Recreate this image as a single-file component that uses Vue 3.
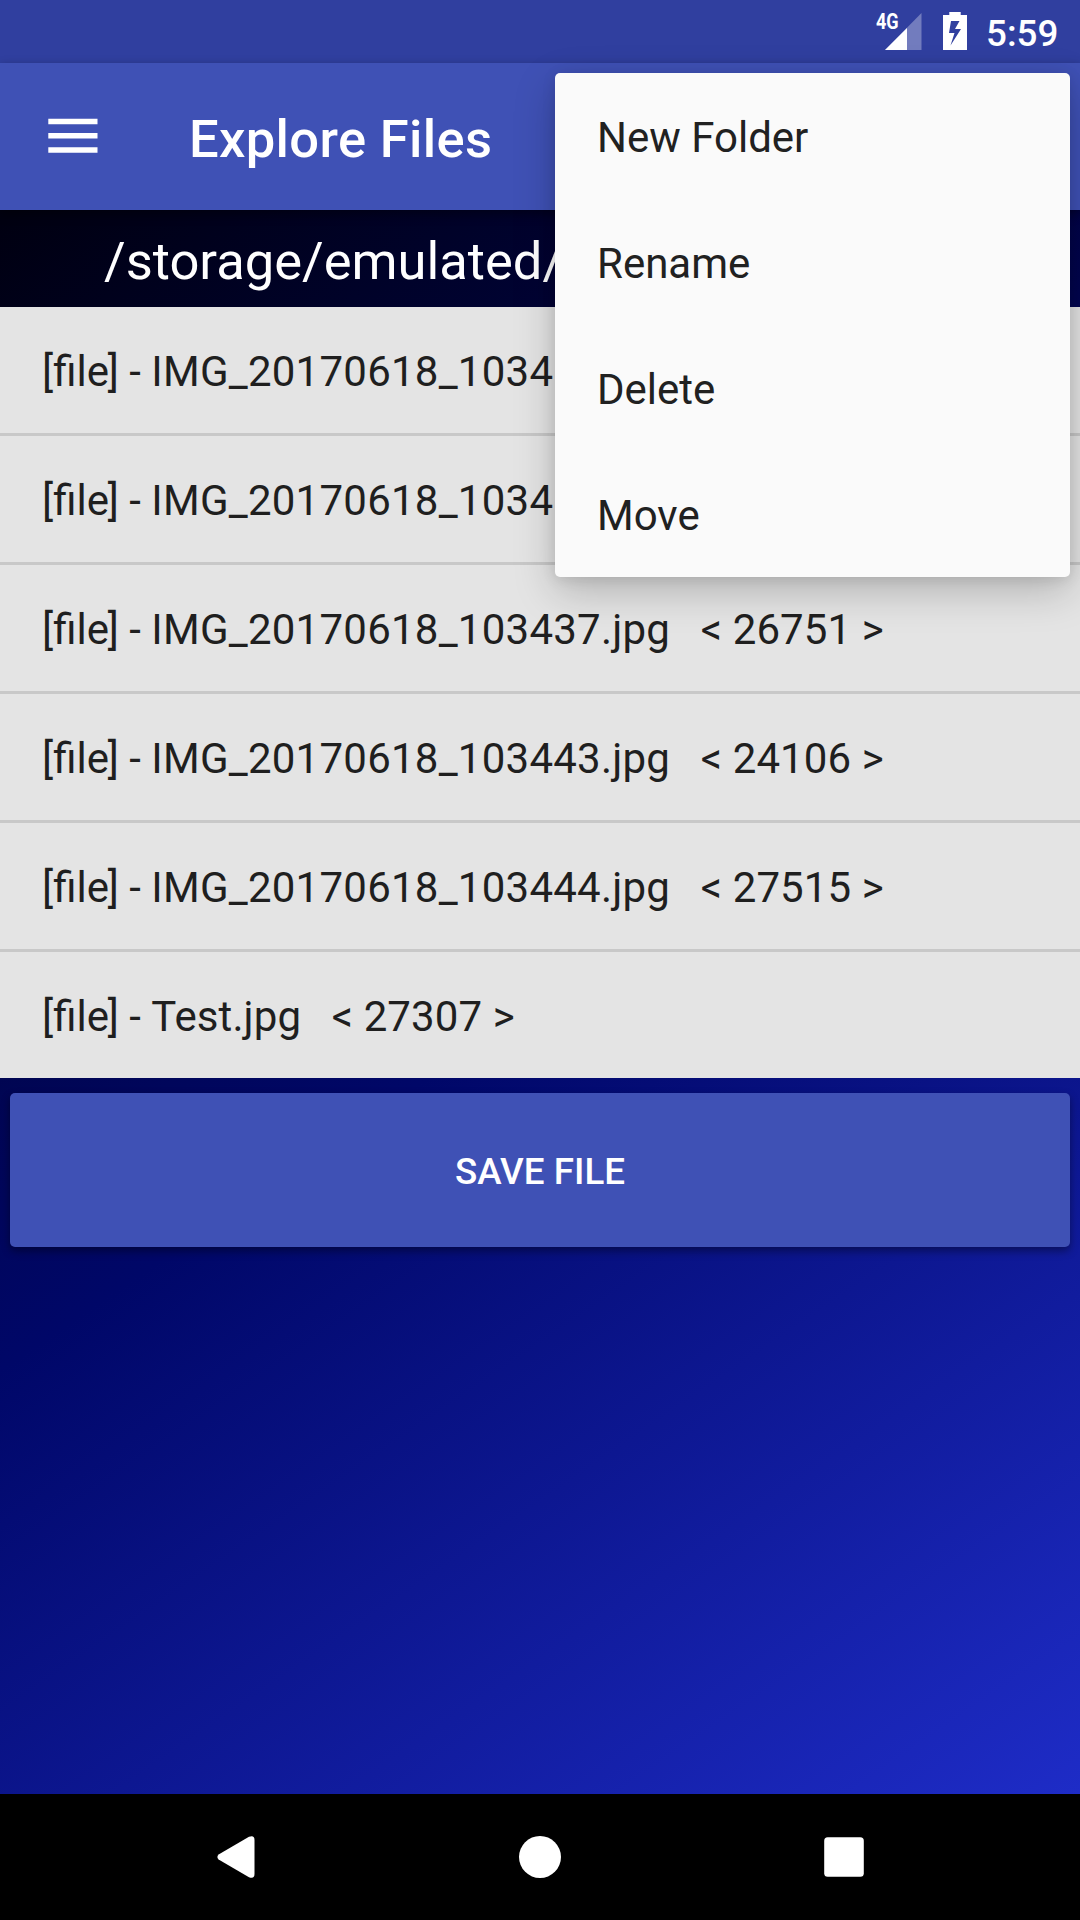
<script setup>
const files = [
  { name: 'IMG_20170618_1034' },
  { name: 'IMG_20170618_1034' },
  { name: 'IMG_20170618_103437.jpg', size: 26751 },
  { name: 'IMG_20170618_103443.jpg', size: 24106 },
  { name: 'IMG_20170618_103444.jpg', size: 27515 },
  { name: 'Test.jpg', size: 27307 },
]
const actions = ['New Folder', 'Rename', 'Delete', 'Move']
</script>

<template>
  <div class="screen">
    <header class="status">
      <div class="signal">
        <span class="network">4G</span>
        <svg width="37" height="37" viewBox="0 0 37 37">
          <path d="M0 37L36.5 0V37Z" fill="#fff" fill-opacity=".32" />
          <path d="M0 37L22 15V37Z" fill="#fff" />
        </svg>
      </div>
      <svg class="battery" width="24" height="38" viewBox="0 0 24 38">
        <path fill="#fff" fill-rule="evenodd" d="M6.3 0H17.7V3H24V38H0V3H6.3ZM8 9L6 21H11.5L7.5 33.5L18 17H12L16.5 9Z" />
      </svg>
      <span class="clock">5:59</span>
    </header>

    <div class="toolbar">
      <svg class="burger" width="50" height="36" viewBox="0 0 50 36">
        <path d="M.3 .7H49.5V6.2H.3ZM.3 15H49.5V20.5H.3ZM.3 29.2H49.5V34.7H.3Z" fill="#fff" />
      </svg>
      <h1>Explore Files</h1>
    </div>

    <main>
      <div class="path">/storage/emulated/</div>
      <ul class="files">
        <li v-for="(f, i) in files" :key="i">
          <span class="kind">[file<span class="close">]</span> -&nbsp;</span><span class="name" :class="{ long: f.name.length > 10 }">{{ f.name }}</span><span v-if="f.size" class="size">&nbsp;&nbsp; &lt; {{ f.size }} &gt;</span>
        </li>
      </ul>
      <button class="save">SAVE FILE</button>
    </main>

    <nav>
      <svg width="38" height="42" viewBox="0 0 38 42">
        <path d="M1.6 18.6L32 .8Q37.5-1.2 37.5 4V38Q37.5 43.2 32 41.2L1.6 23.4Q-.8 21 1.6 18.6Z" fill="#fff" />
      </svg>
      <svg width="42" height="42" viewBox="0 0 42 42"><circle cx="21" cy="21" r="21" fill="#fff" /></svg>
      <svg width="40" height="40" viewBox="0 0 40 40"><rect x=".2" y=".2" width="39.6" height="39.6" rx="3.5" fill="#fff" /></svg>
    </nav>

    <div class="menu">
      <div v-for="a in actions" :key="a" class="action">{{ a }}</div>
    </div>
  </div>
</template>

<style>
body { margin: 0; }
</style>

<style scoped>
.screen {
  position: relative;
  display: flex;
  flex-direction: column;
  width: 1080px;
  height: 1920px;
  overflow: hidden;
  font-family: Roboto, "Liberation Sans", sans-serif;
  color: #fff;
}
.status {
  display: flex;
  align-items: flex-start;
  height: 63px;
  box-sizing: border-box;
  padding-left: 876px;
  background: #303f9f;
}
.signal {
  display: flex;
  width: 67px;
  padding-top: 13px;
}
.network {
  width: 9px;
  font-size: 22px;
  font-weight: 700;
  line-height: 18px;
  white-space: nowrap;
  transform: scaleX(.82);
  transform-origin: left;
}
.signal svg { flex: none; }
.battery {
  flex: none;
  margin-top: 12px;
}
.clock {
  margin-left: 19px;
  font-size: 36.75px;
  font-weight: 500;
  line-height: 68px;
}
.toolbar {
  position: relative;
  display: flex;
  align-items: center;
  height: 147px;
  background: #3f51b5;
  box-shadow: 0 4px 10px rgba(0, 0, 0, .4);
}
.burger {
  margin-left: 48px;
  margin-bottom: 2px;
}
h1 {
  margin: 0 0 0 91px;
  font-size: 52.5px;
  font-weight: 500;
  letter-spacing: .35px;
  line-height: 62px;
  padding-top: 4px;
}
main {
  flex: 1;
  background: linear-gradient(145.71deg, #000010 0%, #000768 50%, #1e2cc7 100%);
}
.path {
  height: 97px;
  padding-left: 104px;
  font-size: 52.5px;
  line-height: 102px;
  white-space: nowrap;
}
.files {
  margin: 0;
  padding: 0;
  list-style: none;
  background: #e4e4e4;
  color: #1f1f1f;
}
.files li {
  height: 126px;
  padding-left: 42px;
  font-size: 42px;
  line-height: 130px;
  white-space: nowrap;
}
.files li + li { border-top: 3px solid #c8c8c8; }
.close { margin-left: -1.2px; }
.name { letter-spacing: .1px; }
.name.long { letter-spacing: .24px; }
.size {
  margin-left: -1px;
  letter-spacing: .1px;
}
.save {
  display: block;
  width: 1060px;
  height: 154px;
  margin: 15px 10px 0;
  padding: 2px 0 0;
  border: 0;
  border-radius: 5px;
  background: #3f51b5;
  box-shadow: 0 4px 8px rgba(0, 0, 0, .4);
  color: #fff;
  font: 500 36.75px Roboto, "Liberation Sans", sans-serif;
}
nav {
  display: flex;
  align-items: center;
  justify-content: space-between;
  height: 126px;
  box-sizing: border-box;
  padding: 0 216px 0 217px;
  background: #000;
}
.menu {
  position: absolute;
  left: 555px;
  top: 73px;
  width: 515px;
  height: 504px;
  border-radius: 5px;
  background: #fafafa;
  box-shadow: 0 14px 42px rgba(0, 0, 0, .22), 0 2px 14px rgba(0, 0, 0, .1);
  color: #212121;
}
.action {
  height: 126px;
  padding-left: 42px;
  font-size: 42px;
  line-height: 130px;
}
</style>
